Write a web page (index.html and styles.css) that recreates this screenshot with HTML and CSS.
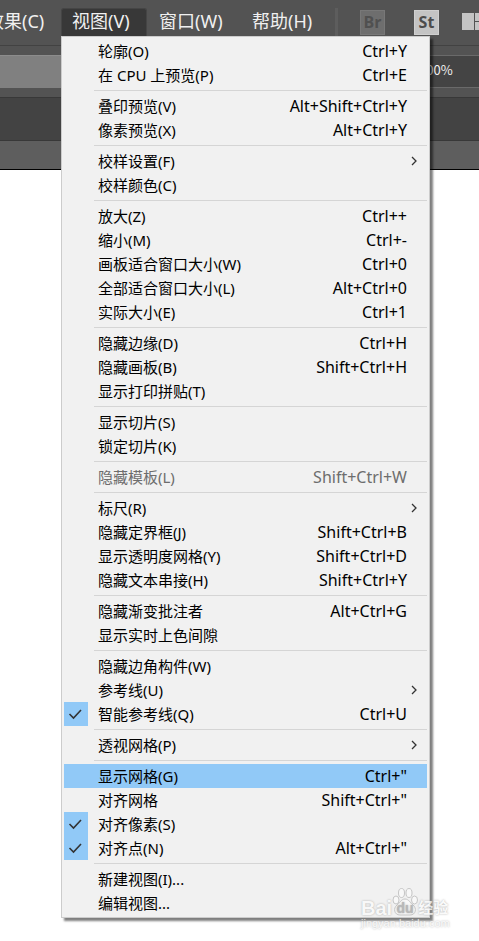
FILE: index.html
```html
<!DOCTYPE html>
<html lang="zh-CN">
<head>
    <meta charset="UTF-8" />
    <meta name="viewport" content="width=device-width, initial-scale=1.0" />
    <title>视图菜单</title>
    <link rel="stylesheet" href="styles.css">
</head>
<body>
    <!-- 图标 -->
    <svg class="defs" aria-hidden="true">
        <symbol id="check" viewBox="0 0 24 24"><path d="M5.5 12 L9.5 16 L17 8" fill="none" stroke="#333" stroke-width="1.6" /></symbol>
        <symbol id="arrow" viewBox="0 0 8 10"><path d="M1 1 L5 5 L1 9" fill="none" stroke="#333" stroke-width="1.3" /></symbol>
    </svg>

    <header>
        <!-- 菜单栏 -->
        <nav class="menubar">
            <button class="top-item">效果(C)</button>
            <div class="top-group">
                <button class="top-item open">视图(V)</button>
                <div class="menu" id="menu"></div>
            </div>
            <button class="top-item wide">窗口(W)</button>
            <button class="top-item wide">帮助(H)</button>
            <span class="divider"></span>
            <button class="app-btn off">Br</button>
            <button class="app-btn">St</button>
            <button class="layout-btn" aria-label="排列文档">
                <svg width="28" height="17" viewBox="0 0 28 17"><path d="M0 0h12v17H0z M13 0h15v8H13z M13 9h15v8H13z" fill="#c4c4c4" /></svg>
            </button>
        </nav>

        <!-- 控制栏 -->
        <div class="control-bar">
            <div class="field-blank"></div>
            <input class="zoom" type="text" value="100%" aria-label="缩放">
        </div>
        <div class="tab-bar"></div>
        <div class="doc-bar"></div>
    </header>
    <main class="canvas"></main>

    <!-- 水印 -->
    <div class="watermark">
        <div class="brand">
            <span>Bai</span>
            <svg width="26" height="30" viewBox="0 0 26 30">
                <g>
                    <ellipse cx="4" cy="13" rx="3" ry="4" />
                    <ellipse cx="9.500" cy="6" rx="3" ry="4.500" />
                    <ellipse cx="17" cy="6" rx="3" ry="4.500" />
                    <ellipse cx="22.500" cy="13" rx="3" ry="4" />
                    <path d="M13 12 C9 12 8 16 5 18 C1 21 2 28 8 28 H18 C24 28 25 21 21 18 C18 16 17 12 13 12Z" />
                </g>
                <text x="13" y="26" text-anchor="middle">du</text>
            </svg>
            <span class="cn">经验</span>
        </div>
        <div class="site">jingyan.baidu.com</div>
    </div>

    <script>
        // 每组之间用分隔线隔开: [名称, 快捷键, 状态]
        const groups = [
            [['轮廓(O)', 'Ctrl+Y'], ['在 CPU 上预览(P)', 'Ctrl+E']],
            [['叠印预览(V)', 'Alt+Shift+Ctrl+Y'], ['像素预览(X)', 'Alt+Ctrl+Y']],
            [['校样设置(F)', '', 'sub'], ['校样颜色(C)']],
            [['放大(Z)', 'Ctrl++'], ['缩小(M)', 'Ctrl+-'], ['画板适合窗口大小(W)', 'Ctrl+0'],
             ['全部适合窗口大小(L)', 'Alt+Ctrl+0'], ['实际大小(E)', 'Ctrl+1']],
            [['隐藏边缘(D)', 'Ctrl+H'], ['隐藏画板(B)', 'Shift+Ctrl+H'], ['显示打印拼贴(T)']],
            [['显示切片(S)'], ['锁定切片(K)']],
            [['隐藏模板(L)', 'Shift+Ctrl+W', 'disabled']],
            [['标尺(R)', '', 'sub'], ['隐藏定界框(J)', 'Shift+Ctrl+B'],
             ['显示透明度网格(Y)', 'Shift+Ctrl+D'], ['隐藏文本串接(H)', 'Shift+Ctrl+Y']],
            [['隐藏渐变批注者', 'Alt+Ctrl+G'], ['显示实时上色间隙']],
            [['隐藏边角构件(W)'], ['参考线(U)', '', 'sub'], ['智能参考线(Q)', 'Ctrl+U', 'checked']],
            [['透视网格(P)', '', 'sub']],
            [['显示网格(G)', 'Ctrl+"', 'active'], ['对齐网格', 'Shift+Ctrl+"'],
             ['对齐像素(S)', '', 'checked'], ['对齐点(N)', 'Alt+Ctrl+"', 'checked']],
            [['新建视图(I)...'], ['编辑视图...']]
        ];
        const menu = document.getElementById('menu');

        groups.forEach((items, i) => {
            if (i > 0) menu.appendChild(document.createElement('hr'));
            items.forEach(([label, key = '', state = '']) => {
                const btn = document.createElement('button');
                btn.className = `item ${state}`;
                btn.disabled = state === 'disabled';
                btn.innerHTML = `
                    <span class="mark">${state === 'checked' ? '<svg><use href="#check" /></svg>' : ''}</span>
                    <span class="label">${label}</span>
                    <span class="key">${key}</span>
                    <span class="more">${state === 'sub' ? '<svg><use href="#arrow" /></svg>' : ''}</span>`;
                menu.appendChild(btn);
            });
        });
    </script>
</body>
</html>
```
FILE: styles.css
```css
* { box-sizing: border-box; }
html, body {
    margin: 0;
    padding: 0;
    overflow-x: hidden;
}
body {
    position: relative;
    min-height: 100vh;
    background: #fff;
    font-family: "Noto Sans", "Noto Sans CJK SC", sans-serif;
}
button, input {
    margin: 0;
    padding: 0;
    border: none;
    border-radius: 0;
    background: none;
    font-family: inherit;
}
.defs { position: absolute; width: 0; height: 0; }

/* 菜单栏 */
.menubar {
    display: flex;
    align-items: flex-start;
    height: 45px;
    margin-left: -25px;
    background: #535353;
}
.top-group {
    position: relative;
    flex: none;
    height: 36px;
}
.top-item {
    flex: none;
    width: 86px;
    height: 28px;
    margin-top: 8px;
    padding: 0 11px 3px;
    font-size: 18px;
    line-height: 24px;
    color: #f0f0f0;
    text-align: left;
    white-space: nowrap;
}
.top-item.open {
    padding: 0 10px 4px;
    border: 1px solid #454545;
    border-bottom: none;
    border-radius: 3px 3px 0 0;
    background: #383838;
}
.top-item.wide { width: 93px; padding-left: 12px; }
.divider {
    flex: none;
    width: 3px;
    height: 28px;
    margin: 8px 22px 0 2px;
    background: #5d5d5d;
}
.app-btn {
    flex: none;
    width: 25px;
    height: 25px;
    margin: 10px 29px 0 0;
    border: 1px solid #d0d0d0;
    background: #c4c4c4;
    color: #4c4c4c;
    font-family: "Open Sans", sans-serif;
    font-size: 16px;
    font-weight: bold;
    line-height: 23px;
}
.app-btn.off {
    border-color: #787878;
    background: #6e6e6e;
    color: #505050;
}
.layout-btn { flex: none; height: 17px; margin: 13px 0 0 -6px; }
.layout-btn svg { display: block; }

/* 工具条 */
.control-bar {
    display: flex;
    height: 52px;
    padding: 9px 0;
    border-top: 1px solid #424242;
    background: #535353;
}
.field-blank { flex: 1; background: #808080; border-top: 1px solid #8c8c8c; }
.zoom {
    width: 64px;
    padding: 0 0 5px 4px;
    border-top: 1px solid #6a6a6a;
    border-bottom: 1px solid #6a6a6a;
    background: #444;
    color: #f0f0f0;
    font-family: "Noto Sans CJK SC", sans-serif;
    font-size: 13px;
}
.tab-bar {
    height: 44px;
    border-top: 1px solid #383838;
    border-bottom: 1px solid #383838;
    background: #434343;
}
.doc-bar {
    height: 29px;
    border-bottom: 1px solid #000;
    background: #5e5e5e;
}

/* 下拉菜单 */
.menu {
    position: absolute;
    top: 100%;
    left: 0;
    width: 369px;
    padding: 2px;
    border: 1px solid #ccc;
    background: #f1f1f1;
    box-shadow: 3px 3px 2px rgba(0, 0, 0, 0.5);
}
.menu hr {
    height: 1px;
    margin: 3px 0 3px 30px;
    border: none;
    background: #d5d5d5;
}
.item {
    display: flex;
    align-items: center;
    width: 100%;
    height: 24px;
    font-size: 15px;
    line-height: 24px;
    color: #000;
    text-align: left;
    white-space: nowrap;
}
.item:hover, .item.active { background: #91c9f7; }
.item:disabled { color: #6d6d6d; background: none; }
.mark { width: 24px; height: 24px; margin-right: 10px; }
.mark svg { display: block; width: 24px; height: 24px; }
.checked .mark { background: #91c9f7; }
.label { flex: 1; }
.key { font-size: 16px; }
.more { width: 20px; height: 24px; padding: 7px 4px; }
.more svg { display: block; width: 8px; height: 10px; }

/* 水印 */
.watermark {
    position: absolute;
    top: 886px;
    right: 28px;
    width: 90px;
    color: #fafafa;
    text-shadow: 0 0 2px #999;
    opacity: 0.8;
    pointer-events: none;
}
.brand {
    display: flex;
    align-items: flex-end;
    height: 31px;
    font-family: "Liberation Sans", "Noto Sans CJK SC", sans-serif;
    font-size: 20px;
    font-weight: bold;
    line-height: 18px;
}
.brand svg { flex: none; fill: #fafafa; stroke: #bbb; stroke-width: 1; }
.brand text { fill: #aaa; stroke: none; font-size: 14px; }
.brand .cn { font-size: 15px; }
.site {
    font-family: "Liberation Sans", sans-serif;
    font-size: 11px;
    line-height: 12px;
}
```
